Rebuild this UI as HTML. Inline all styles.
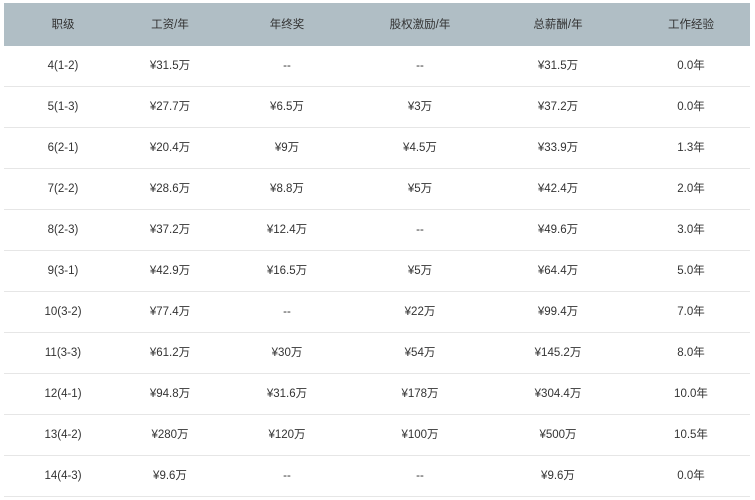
<!DOCTYPE html>
<html><head><meta charset="utf-8"><style>
body{margin:0;background:#fff;width:755px;height:500px;overflow:hidden;font-family:"Liberation Sans","Noto Sans CJK SC",sans-serif;font-size:11.5px;color:#333}
table{position:absolute;left:4px;top:3px;border-collapse:collapse;table-layout:fixed;width:746px}
th{background:#b0bec5;height:43px;font-weight:normal;color:#333;padding:0;line-height:14px;vertical-align:middle}
td{height:40px;text-align:center;border-bottom:1px solid #e6e6e6;padding:0;line-height:14px;vertical-align:middle}
</style></head><body>
<table>
<colgroup><col style="width:118px"><col style="width:96px"><col style="width:138px"><col style="width:128px"><col style="width:148px"><col style="width:118px"></colgroup>
<tr><th>职级</th><th>工资/年</th><th>年终奖</th><th>股权激励/年</th><th>总薪酬/年</th><th>工作经验</th></tr>
<tr><td>4(1-2)</td><td>¥31.5万</td><td>--</td><td>--</td><td>¥31.5万</td><td>0.0年</td></tr>
<tr><td>5(1-3)</td><td>¥27.7万</td><td>¥6.5万</td><td>¥3万</td><td>¥37.2万</td><td>0.0年</td></tr>
<tr><td>6(2-1)</td><td>¥20.4万</td><td>¥9万</td><td>¥4.5万</td><td>¥33.9万</td><td>1.3年</td></tr>
<tr><td>7(2-2)</td><td>¥28.6万</td><td>¥8.8万</td><td>¥5万</td><td>¥42.4万</td><td>2.0年</td></tr>
<tr><td>8(2-3)</td><td>¥37.2万</td><td>¥12.4万</td><td>--</td><td>¥49.6万</td><td>3.0年</td></tr>
<tr><td>9(3-1)</td><td>¥42.9万</td><td>¥16.5万</td><td>¥5万</td><td>¥64.4万</td><td>5.0年</td></tr>
<tr><td>10(3-2)</td><td>¥77.4万</td><td>--</td><td>¥22万</td><td>¥99.4万</td><td>7.0年</td></tr>
<tr><td>11(3-3)</td><td>¥61.2万</td><td>¥30万</td><td>¥54万</td><td>¥145.2万</td><td>8.0年</td></tr>
<tr><td>12(4-1)</td><td>¥94.8万</td><td>¥31.6万</td><td>¥178万</td><td>¥304.4万</td><td>10.0年</td></tr>
<tr><td>13(4-2)</td><td>¥280万</td><td>¥120万</td><td>¥100万</td><td>¥500万</td><td>10.5年</td></tr>
<tr><td>14(4-3)</td><td>¥9.6万</td><td>--</td><td>--</td><td>¥9.6万</td><td>0.0年</td></tr>
</table>
</body></html>
